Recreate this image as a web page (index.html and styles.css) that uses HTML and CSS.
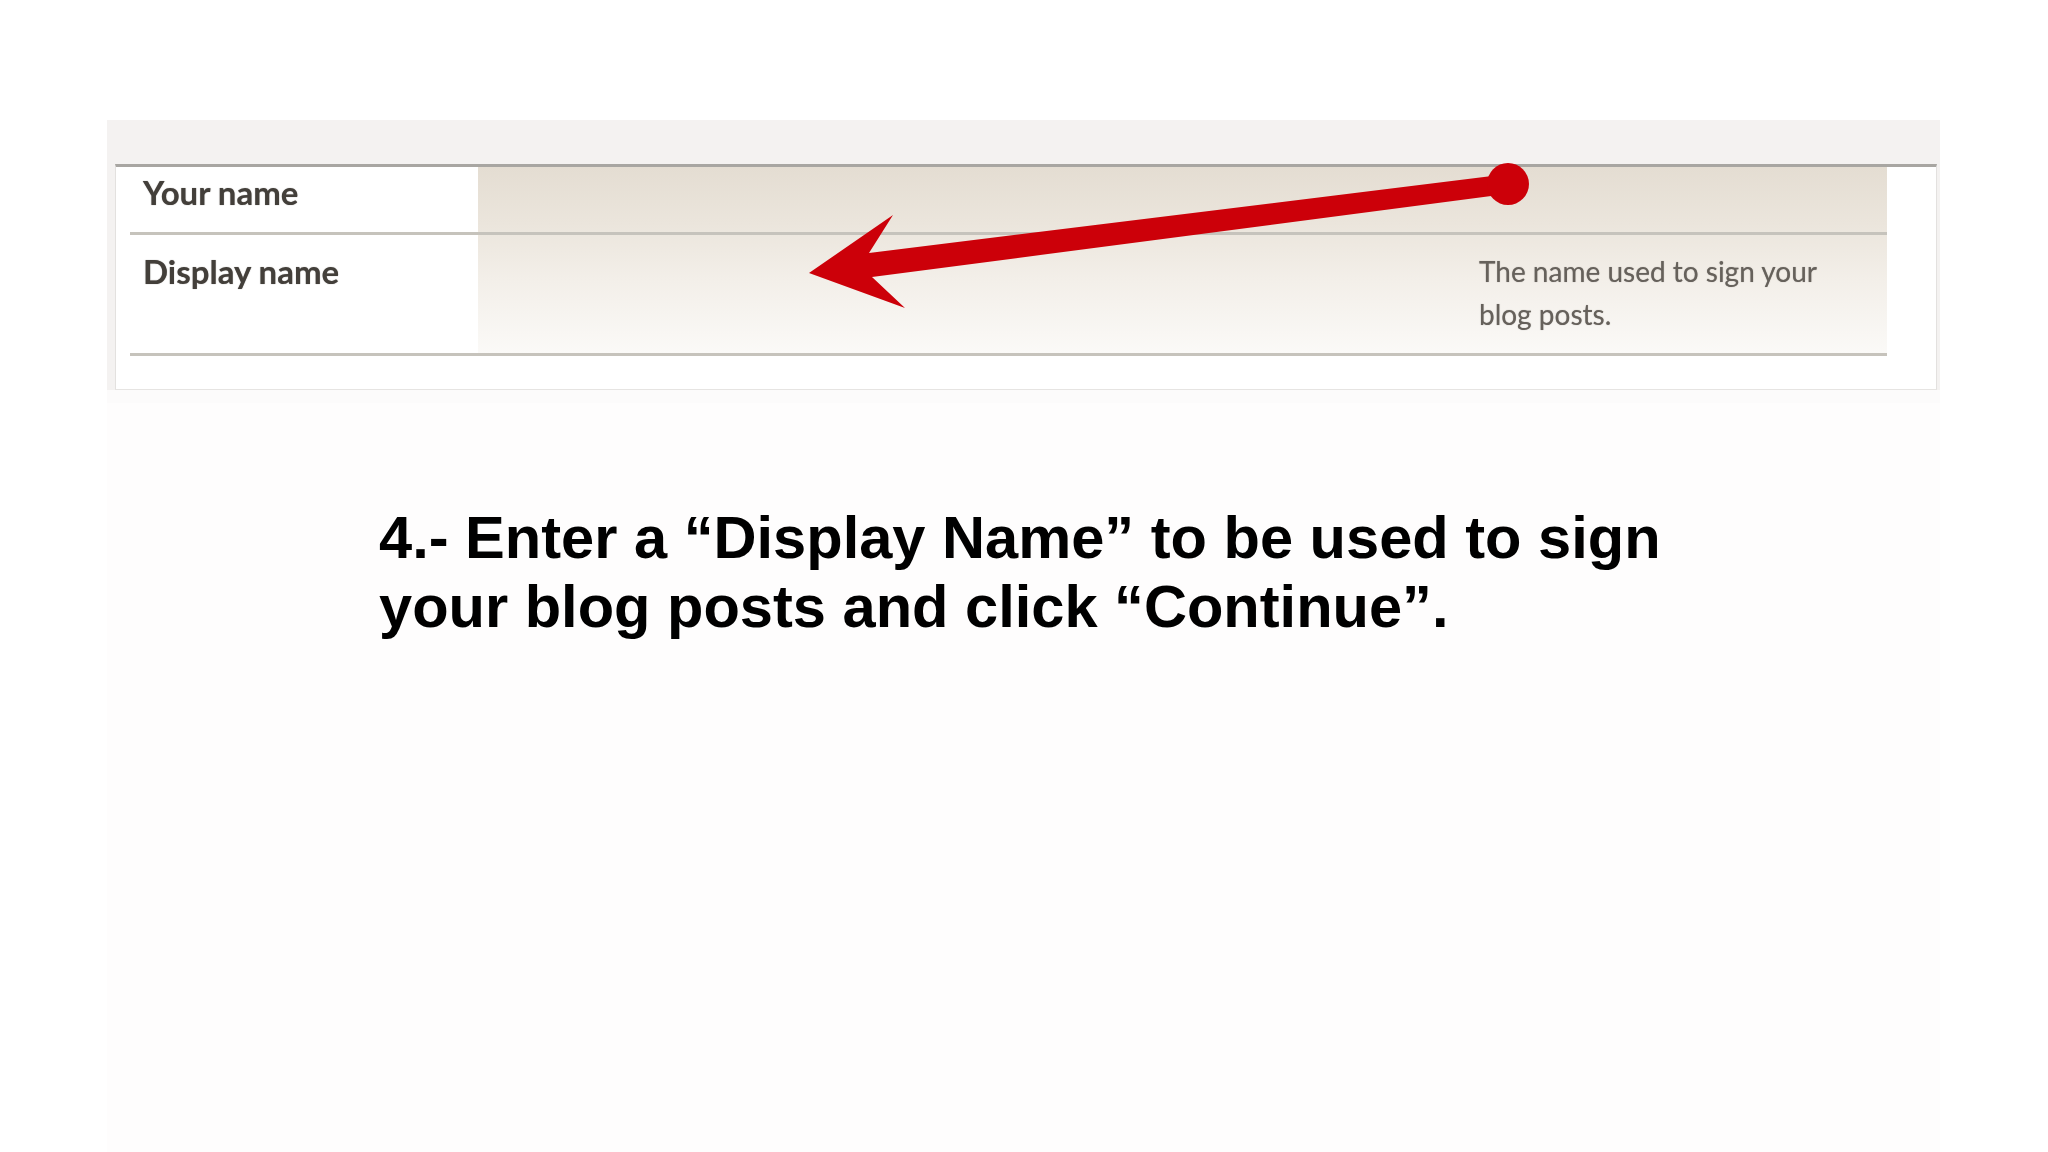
FILE: index.html
```html
<!DOCTYPE html>
<html>
<head>
  <title>Step 4 - Display name</title>
  <meta name="viewport" content="width=device-width, initial-scale=1">
  <link rel="stylesheet" href="styles.css">
</head>
<body>
  <div class="slide">
    <div class="shot">
      <div class="form">
        <div class="fields">
          <div class="row row-name">
            <div class="label">Your name</div>
            <div class="input"></div>
          </div>
          <div class="row row-display">
            <div class="label">Display name</div>
            <div class="input">
              <div class="hint">The name used to sign your blog posts.</div>
            </div>
          </div>
        </div>
      </div>
      <!-- red annotation arrow, drawn in page coordinates -->
      <svg class="arrow" viewBox="107 120 1833 283" width="1833" height="283">
        <polygon fill="#cc0009" points="809,273 893,215 869,253 1492,176 1495,195.5 872,277 905,308"/>
        <circle fill="#cc0009" cx="1508" cy="184" r="21"/>
      </svg>
    </div>
    <h1 class="step">4.- Enter a “Display Name” to be used to sign your blog posts and click “Continue”.</h1>
  </div>
</body>
</html>
```

FILE: styles.css
```css
html, body {
  margin: 0;
  padding: 0;
  background: #fff;
}
.slide {
  margin: 120px 108px 0 107px;
  min-height: 1032px;
  background: #fefdfd;
}
.shot {
  position: relative;
  box-sizing: border-box;
  height: 283px;
  padding: 44px 3px 0 8px;
  background: linear-gradient(#f4f2f1 270px, #fcfbfb 270px);
}
.form {
  box-sizing: border-box;
  height: 226px;
  background: #fff;
  border-top: 3px solid #a8a6a2;
  border-left: 1px solid #e3e1df;
  border-right: 1px solid #e3e1df;
  border-bottom: 1px solid #e6e4e2;
  filter: blur(0.5px);
}
.fields {
  margin: 0 49px 0 14px;
  background: linear-gradient(#e4ddd2, #ebe5dc 30%, #f3efe9 60%, #fbfaf8) 348px 0 / calc(100% - 348px) 100% no-repeat;
}
.row {
  display: grid;
  grid-template-columns: 348px 1fr;
  border-bottom: 3px solid #c6c3bc;
}
.row-name {
  height: 65px;
}
.row-display {
  height: 118px;
}
.label {
  font-family: Lato, "Liberation Sans", sans-serif;
  font-weight: 700;
  font-size: 33px;
  line-height: 38px;
  color: #433f3a;
  padding: 6px 0 0 13px;
  background: #fff;
  text-shadow: 0 0 1px rgba(60, 55, 50, .6);
}
.row-display .label {
  padding-top: 17px;
}
.input {
  display: flex;
  justify-content: flex-end;
  padding-right: 28px;
}
.hint {
  width: 380px;
  padding-top: 15px;
  font-family: Lato, "Liberation Sans", sans-serif;
  font-size: 28px;
  line-height: 43px;
  color: #66615b;
  text-shadow: 0 0 1px rgba(100, 95, 90, .6);
}
.arrow {
  position: absolute;
  left: 0;
  top: 0;
  filter: blur(0.4px);
}
.step {
  width: 1340px;
  margin: 100px 0 0 272px;
  font-family: "Liberation Sans", Arial, sans-serif;
  font-weight: 700;
  font-size: 59.6px;
  line-height: 69px;
  color: #000;
}
```
